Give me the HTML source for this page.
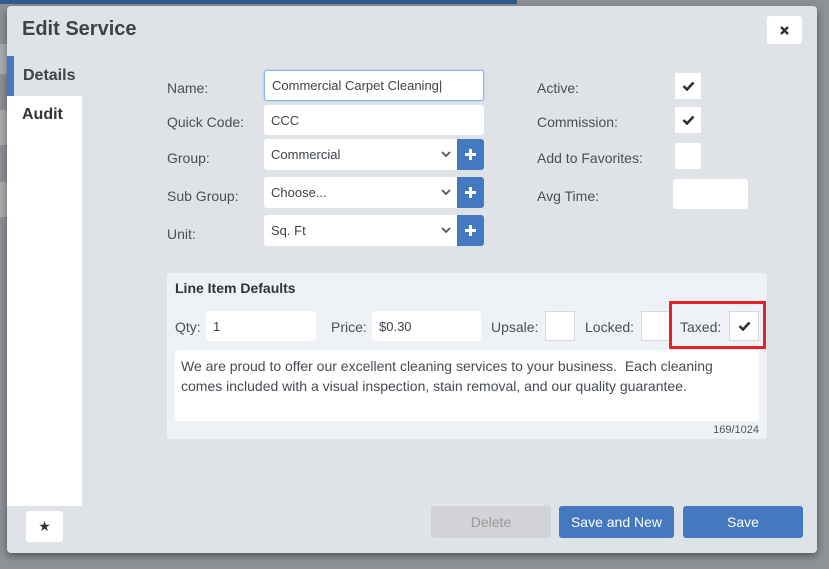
<!DOCTYPE html>
<html><head><style>
*{box-sizing:border-box;margin:0;padding:0}
body{width:829px;height:569px;overflow:hidden;background:#8d9095;font-family:"Liberation Sans",sans-serif;position:relative;color:#3d434a}
.a{position:absolute}
.modal{left:7px;top:6px;width:810px;height:547px;background:#dfe2e6;border-radius:4px;box-shadow:0 3px 8px rgba(0,0,0,.4)}
.lbl{font-size:14px;color:#4a5058}
.inp{background:#fff;border-radius:3px;font-size:13px;padding-left:7px;display:flex;align-items:center;color:#3d434a}
.plus{background:#4479c0;border-radius:0 3px 3px 0;display:flex;align-items:center;justify-content:center}
.chk{background:#fff;display:flex;align-items:center;justify-content:center}
.car{position:absolute;right:6px;top:12px}
.btn{color:#fff;font-size:14px;display:flex;align-items:center;justify-content:center;border-radius:3px;background:#4479c0}
</style></head><body>
<div class="a" style="left:0;top:0;width:517px;height:4px;background:#2f5a94"></div>
<div class="a" style="left:0;top:44px;width:7px;height:30px;background:#a9acb0"></div>
<div class="a" style="left:0;top:110px;width:7px;height:35px;background:#a9acb0"></div>
<div class="a" style="left:0;top:182px;width:7px;height:35px;background:#a9acb0"></div>
<div class="a modal"></div>
<div class="a" style="left:22px;top:18px;font-size:20px;font-weight:bold;color:#3d434a">Edit Service</div>
<div class="a chk" style="left:767px;top:16px;width:35px;height:28px;border-radius:3px"><svg width="9" height="9" viewBox="0 0 9 9"><path d="M1 1L8 8M8 1L1 8" stroke="#2d3238" stroke-width="2.4"/></svg></div>
<div class="a" style="left:7px;top:56px;width:7px;height:40px;background:#4479c0"></div>
<div class="a" style="left:23px;top:67px;font-size:16px;font-weight:bold;color:#3d434a">Details</div>
<div class="a" style="left:7px;top:96px;width:75px;height:410px;background:#fff"></div>
<div class="a" style="left:22px;top:106px;font-size:16px;font-weight:bold;color:#333">Audit</div>
<div class="a chk" style="left:26px;top:511px;width:37px;height:31px;border-radius:3px;font-size:14px;color:#2d3238">★</div>

<div class="a lbl" style="left:167px;top:80px">Name:</div>
<div class="a inp" style="left:264px;top:70px;width:220px;height:31px;border:1px solid #8bb5e8;box-shadow:0 0 2px #9cc3f0">Commercial Carpet Cleaning|</div>
<div class="a lbl" style="left:167px;top:114px">Quick Code:</div>
<div class="a inp" style="left:264px;top:105px;width:220px;height:30px">CCC</div>
<div class="a lbl" style="left:167px;top:150px">Group:</div>
<div class="a inp" style="left:264px;top:139px;width:193px;height:31px;border-radius:3px 0 0 3px">Commercial<svg class="car" width="10" height="7" viewBox="0 0 10 7"><path d="M1 1L5 5L9 1" stroke="#555" stroke-width="1.8" fill="none"/></svg></div>
<div class="a plus" style="left:457px;top:139px;width:27px;height:31px"><svg width="11" height="11" viewBox="0 0 11 11"><path d="M5.5 0V11M0 5.5H11" stroke="#fff" stroke-width="3"/></svg></div>
<div class="a lbl" style="left:167px;top:188px">Sub Group:</div>
<div class="a inp" style="left:264px;top:177px;width:193px;height:31px;border-radius:3px 0 0 3px">Choose...<svg class="car" width="10" height="7" viewBox="0 0 10 7"><path d="M1 1L5 5L9 1" stroke="#555" stroke-width="1.8" fill="none"/></svg></div>
<div class="a plus" style="left:457px;top:177px;width:27px;height:31px"><svg width="11" height="11" viewBox="0 0 11 11"><path d="M5.5 0V11M0 5.5H11" stroke="#fff" stroke-width="3"/></svg></div>
<div class="a lbl" style="left:167px;top:226px">Unit:</div>
<div class="a inp" style="left:264px;top:215px;width:193px;height:31px;border-radius:3px 0 0 3px">Sq. Ft<svg class="car" width="10" height="7" viewBox="0 0 10 7"><path d="M1 1L5 5L9 1" stroke="#555" stroke-width="1.8" fill="none"/></svg></div>
<div class="a plus" style="left:457px;top:215px;width:27px;height:31px"><svg width="11" height="11" viewBox="0 0 11 11"><path d="M5.5 0V11M0 5.5H11" stroke="#fff" stroke-width="3"/></svg></div>

<div class="a lbl" style="left:537px;top:80px">Active:</div>
<div class="a chk" style="left:675px;top:73px;width:26px;height:26px"><svg width="13" height="10" viewBox="0 0 13 10"><path d="M1.5 5L5 8.5L11.5 1.5" stroke="#2d3238" stroke-width="2.6" fill="none"/></svg></div>
<div class="a lbl" style="left:537px;top:114px">Commission:</div>
<div class="a chk" style="left:675px;top:107px;width:26px;height:26px"><svg width="13" height="10" viewBox="0 0 13 10"><path d="M1.5 5L5 8.5L11.5 1.5" stroke="#2d3238" stroke-width="2.6" fill="none"/></svg></div>
<div class="a lbl" style="left:537px;top:150px">Add to Favorites:</div>
<div class="a chk" style="left:675px;top:143px;width:26px;height:26px"></div>
<div class="a lbl" style="left:537px;top:188px">Avg Time:</div>
<div class="a inp" style="left:673px;top:179px;width:75px;height:30px"></div>

<div class="a" style="left:167px;top:273px;width:600px;height:166px;background:#eef1f5;border-radius:3px"></div>
<div class="a" style="left:175px;top:280px;font-size:14px;font-weight:bold;color:#333">Line Item Defaults</div>
<div class="a lbl" style="left:175px;top:319px">Qty:</div>
<div class="a inp" style="left:206px;top:311px;width:110px;height:30px">1</div>
<div class="a lbl" style="left:331px;top:319px">Price:</div>
<div class="a inp" style="left:372px;top:311px;width:109px;height:30px">$0.30</div>
<div class="a lbl" style="left:491px;top:319px">Upsale:</div>
<div class="a chk" style="left:545px;top:311px;width:30px;height:30px;border:1px solid #d6d9dd"></div>
<div class="a lbl" style="left:585px;top:319px">Locked:</div>
<div class="a chk" style="left:641px;top:311px;width:30px;height:30px;border:1px solid #d6d9dd"></div>
<div class="a lbl" style="left:680px;top:319px">Taxed:</div>
<div class="a chk" style="left:729px;top:311px;width:30px;height:30px;border:1px solid #d6d9dd"><svg width="13" height="10" viewBox="0 0 13 10"><path d="M1.5 5L5 8.5L11.5 1.5" stroke="#2d3238" stroke-width="2.6" fill="none"/></svg></div>
<div class="a" style="left:669px;top:301px;width:97px;height:48px;border:3px solid #e8202a"></div>
<div class="a" style="left:175px;top:350px;width:584px;height:71px;background:#fff;border-radius:3px;padding:6px 6px;font-size:14px;line-height:20px;color:#454b52">We are proud to offer our excellent cleaning services to your business.&nbsp; Each cleaning comes included with a visual inspection, stain removal, and our quality guarantee.</div>
<div class="a" style="left:700px;top:424px;width:59px;text-align:right;font-size:11px;color:#555">169/1024</div>

<div class="a btn" style="left:431px;top:506px;width:120px;height:32px;background:#d1d3d6;color:#999">Delete</div>
<div class="a btn" style="left:559px;top:506px;width:115px;height:32px">Save and New</div>
<div class="a btn" style="left:683px;top:506px;width:120px;height:32px">Save</div>
</body></html>
